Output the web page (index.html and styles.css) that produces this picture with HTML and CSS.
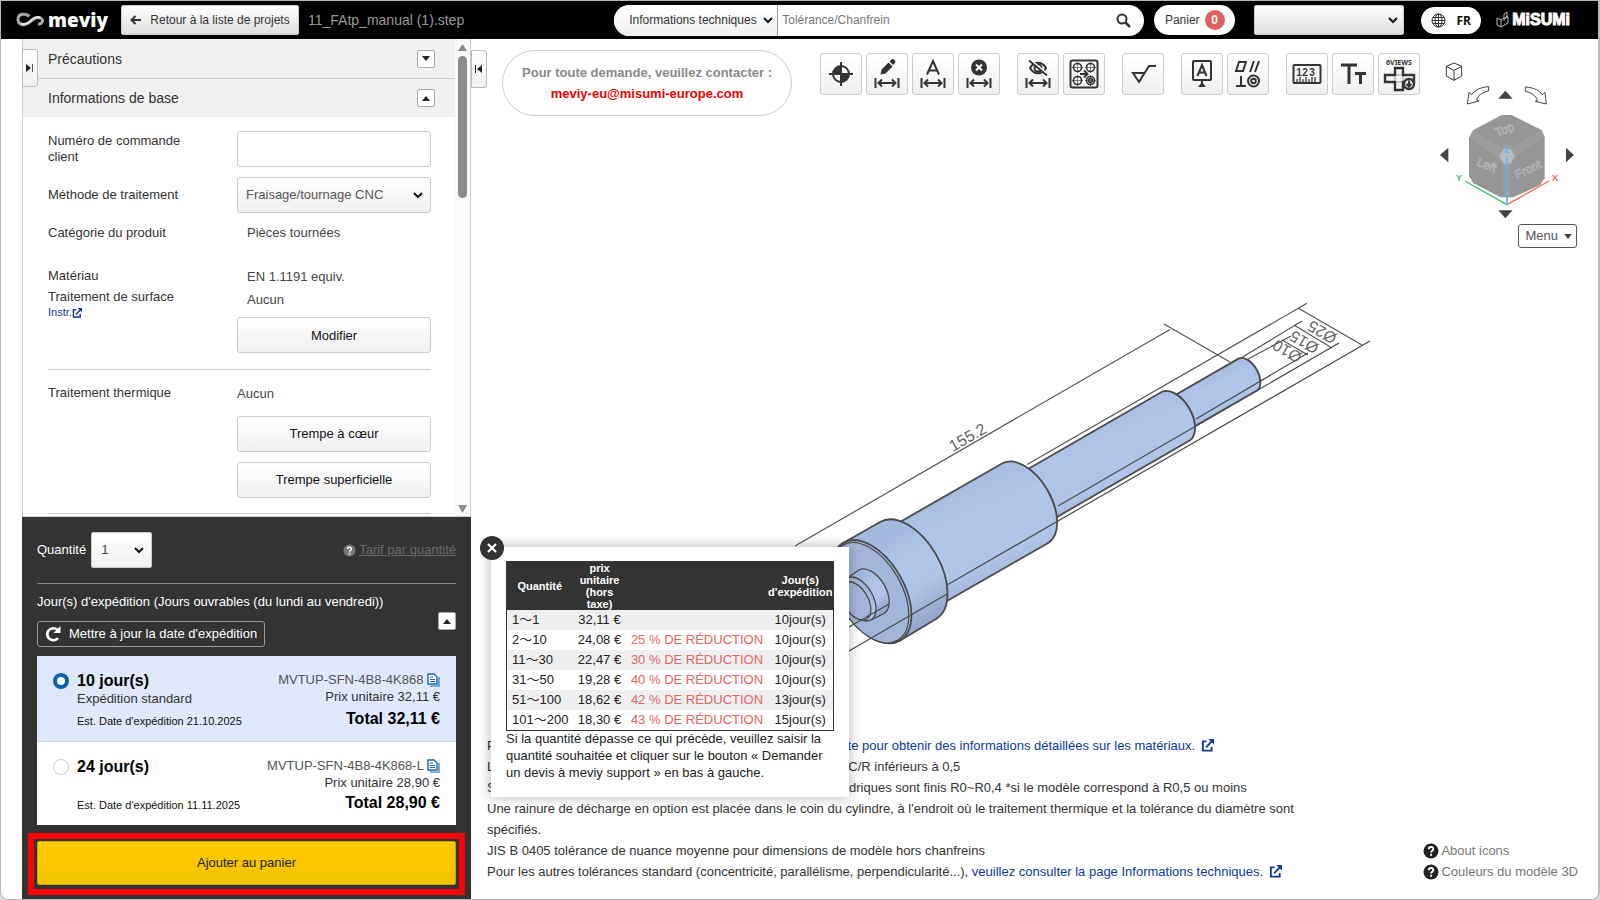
FILE: index.html
```html
<!DOCTYPE html>
<html lang="fr">
<head>
    <meta charset="UTF-8">
    <meta name="viewport" content="width=device-width, initial-scale=1.0">
    <title>meviy</title>
    <link rel="stylesheet" href="styles.css">
</head>
<body>
    <!-- Shared icons -->
    <svg class="sprite" aria-hidden="true">
        <symbol id="arrow-range" viewBox="0 0 26 12">
            <path d="M1.500 1v10M24.500 1v10" stroke="#333" stroke-width="2"/>
            <path d="M4 6h18M8 2.500L4.500 6l3.500 3.500M18 2.500L21.500 6l-3.500 3.500" fill="none" stroke="#333" stroke-width="2"/>
        </symbol>
        <symbol id="external" viewBox="0 0 14 14">
            <path d="M6 2.500H2v10h9.500V8.500" fill="none" stroke="currentColor" stroke-width="2"/>
            <path d="M5.500 9L12 2" stroke="currentColor" stroke-width="2"/>
            <path d="M8 0h6v6z" fill="currentColor"/>
        </symbol>
        <symbol id="question" viewBox="0 0 16 16">
            <circle cx="8" cy="8" r="7.500" fill="currentColor"/>
            <path class="mark" d="M5.700 6.300C5.700 3.300 10.400 3.400 10.300 6c0 1.700-2.200 1.700-2.200 3.600M8.100 10.800v2" fill="none" stroke-width="1.900"/>
        </symbol>
        <symbol id="copy" viewBox="0 0 13 14">
            <path d="M1 1h6l3 3v7H1z" fill="#fff" stroke="#1b66b5" stroke-width="1.400"/>
            <path d="M3 4h3M3 6.500h5M3 8.500h5" stroke="#1b66b5"/>
            <path d="M3 13h9V4" fill="none" stroke="#5b94cd" stroke-width="1.600"/>
        </symbol>
    </svg>

    <div class="app">
        <header class="topbar">
            <div class="logo">
                <svg width="30" height="16" viewBox="0 0 30 16">
                    <path d="M13.500 4.200C9 .8 2 1.500 2 7.500c0 5.500 7 7 12 2.500 4-3.500 7-5.500 10.500-4 4 2 1.500 6.500-2.500 6" fill="none" stroke="#aaa5aa" stroke-width="3"/>
                    <path d="M5 11.500c4 2 8-1 11-4 3-2.500 6-3 8.500-1.500" fill="none" stroke="#e8e6e8" stroke-width="2"/>
                </svg>
                <span>meviy</span>
            </div>
            <button class="back-btn" type="button">
                <svg width="12" height="10" viewBox="0 0 12 10"><path d="M11 5H2M5.500 1L1.500 5l4 4" fill="none" stroke="#333" stroke-width="2"/></svg>
                Retour à la liste de projets
            </button>
            <span class="file-name">11_FAtp_manual (1).step</span>

            <form class="search">
                <select class="search-type" aria-label="Type de recherche">
                    <option>Informations techniques</option>
                </select>
                <input class="search-input" type="text" placeholder="Tolérance/Chanfrein" aria-label="Recherche">
                <button class="search-btn" type="button" aria-label="Rechercher">
                    <svg width="15" height="15" viewBox="0 0 15 15"><circle cx="6" cy="6" r="4.500" fill="none" stroke="#333" stroke-width="2"/><path d="M9.500 9.500L14 14" stroke="#333" stroke-width="2.500"/></svg>
                </button>
            </form>
            <button class="cart" type="button">Panier <span class="badge">0</span></button>
            <select class="account" aria-label="Compte"><option></option></select>
            <button class="lang" type="button">
                <svg width="15" height="15" viewBox="0 0 15 15" fill="none" stroke="#333">
                    <circle cx="7.500" cy="7.500" r="6.500"/><ellipse cx="7.500" cy="7.500" rx="3.500" ry="6.500"/><path d="M7.500 1v13M1 7.500h13M2 4.500h11M2 10.500h11"/>
                </svg>
                FR
            </button>
            <div class="misumi">
                <svg width="14" height="18" viewBox="0 0 14 18" fill="none" stroke="#bbb">
                    <path d="M1 7l4 2v7l-4-2zM5 9l3-2v3M5 16l7-4V6l-4 2M8 8V3l3-2v4l-3 3M12 6l-1-1"/>
                </svg>
                <span>MiSUMi</span>
            </div>
        </header>

        <main class="workspace">
            <aside class="sidebar">
                <button class="side-tab" type="button" aria-label="Déplier">
                    <svg width="8" height="8" viewBox="0 0 8 8"><path d="M0 0l5 4-5 4z" fill="#222"/><path d="M6.500 0v8" stroke="#555"/></svg>
                </button>
                <div class="settings">
                    <div class="settings-body">
                        <div class="section-head">
                            <span>Précautions</span>
                            <button class="toggle" type="button" aria-label="Ouvrir"><svg width="8" height="5" viewBox="0 0 8 5"><path d="M0 0h8L4 5z" fill="#222"/></svg></button>
                        </div>
                        <div class="section-head">
                            <span>Informations de base</span>
                            <button class="toggle" type="button" aria-label="Fermer"><svg width="8" height="5" viewBox="0 0 8 5"><path d="M0 5h8L4 0z" fill="#222"/></svg></button>
                        </div>
                        <div class="fields">
                            <div class="row tall">
                                <label for="order">Numéro de commande client</label>
                                <input class="field" id="order" type="text">
                            </div>
                            <div class="row">
                                <label for="method">Méthode de traitement</label>
                                <select class="field" id="method"><option>Fraisage/tournage CNC</option></select>
                            </div>
                            <div class="row category">
                                <span>Catégorie du produit</span>
                                <span class="value">Pièces tournées</span>
                            </div>
                            <div class="row material">
                                <div>
                                    <div>Matériau</div>
                                    <div>Traitement de surface</div>
                                    <a class="instr" href="#">Instr.<svg width="10" height="10"><use href="#external"/></svg></a>
                                </div>
                                <div>
                                    <div class="value">EN 1.1191 equiv.</div>
                                    <div class="value">Aucun</div>
                                    <button class="field" type="button">Modifier</button>
                                </div>
                            </div>
                            <div class="row heat">
                                <div>Traitement thermique</div>
                                <div class="heat-options">
                                    <div>Aucun</div>
                                    <button class="field" type="button">Trempe à cœur</button>
                                    <button class="field" type="button">Trempe superficielle</button>
                                </div>
                            </div>
                        </div>
                    </div>
                    <div class="scrollbar">
                        <svg width="9" height="8" viewBox="0 0 9 8"><path d="M0 7L4.500 0 9 7z" fill="#8b8b8b"/></svg>
                        <div class="thumb"></div>
                        <svg width="9" height="8" viewBox="0 0 9 8"><path d="M0 0h9L4.500 8z" fill="#8b8b8b"/></svg>
                    </div>
                </div>

                <section class="order">
                    <div class="quantity">
                        <label for="qty">Quantité</label>
                        <select class="qty" id="qty"><option>1</option></select>
                        <a class="price-link" href="#"><svg width="13" height="13"><use href="#question"/></svg><span>Tarif par quantité</span></a>
                    </div>
                    <div class="ship-title">Jour(s) d'expédition (Jours ouvrables (du lundi au vendredi))</div>
                    <div class="ship-tools">
                        <button class="refresh" type="button">
                            <svg width="16" height="16" viewBox="0 0 16 16"><path d="M12.500 4A6 6 0 1 0 13 12" fill="none" stroke="#fff" stroke-width="2.600"/><path d="M15.500 0v7H8.500z" fill="#fff"/></svg>
                            Mettre à jour la date d'expédition
                        </button>
                        <button class="toggle" type="button" aria-label="Fermer"><svg width="8" height="5" viewBox="0 0 8 5"><path d="M0 5h8L4 0z" fill="#222"/></svg></button>
                    </div>
                    <div class="plans">
                        <label class="plan selected">
                            <input type="radio" name="plan" checked>
                            <span class="plan-info">
                                <span class="days">10 jour(s)</span>
                                <span>Expédition standard</span>
                                <span class="date">Est. Date d'expédition 21.10.2025</span>
                            </span>
                            <span class="plan-price">
                                <span class="code">MVTUP-SFN-4B8-4K868 <svg width="13" height="14"><use href="#copy"/></svg></span>
                                <span>Prix unitaire 32,11 €</span>
                                <span class="total">Total 32,11 €</span>
                            </span>
                        </label>
                        <label class="plan">
                            <input type="radio" name="plan">
                            <span class="plan-info">
                                <span class="days">24 jour(s)</span>
                                <span class="date">Est. Date d'expédition 11.11.2025</span>
                            </span>
                            <span class="plan-price">
                                <span class="code">MVTUP-SFN-4B8-4K868-L <svg width="13" height="14"><use href="#copy"/></svg></span>
                                <span>Prix unitaire 28,90 €</span>
                                <span class="total">Total 28,90 €</span>
                            </span>
                        </label>
                    </div>
                    <div class="highlight">
                        <button class="add-btn" type="button">Ajouter au panier</button>
                    </div>
                </section>
            </aside>

            <section class="viewer">
                <!-- 3D model with dimensions -->
                <svg class="model" width="600" height="370" viewBox="780 290 600 370">
                    <defs>
                        <linearGradient id="body" gradientUnits="objectBoundingBox" x1="0.300" y1="0.200" x2="0.700" y2="0.900">
                            <stop offset="0" stop-color="#a3b8de"/>
                            <stop offset="0.300" stop-color="#b0c5e9"/>
                            <stop offset="0.650" stop-color="#afc4e8"/>
                            <stop offset="1" stop-color="#93a8cc"/>
                        </linearGradient>
                    </defs>
                    <g fill="none" stroke="#555" stroke-width="1.200">
                        <path d="M795 546L1170 329.500M1164 324l66 38M1027 464.500L1307 303.300M1241 358l61-37M1248 359l43-23M1298 308l64 37M1294 325l38 23M1282 340l26 15"/>
                    </g>
                    <g fill="url(#body)" stroke="#4a4a4a" stroke-width="1.800">
                        <path d="M1168 399.300L1238.500 358.600A18.500 10.700 60 0 1 1257 390.600L1185 432z"/>
                        <path d="M1009 480L1162 391.800A28 16.200 60 0 1 1190 440.200L1040 526.800z"/>
                        <path d="M848.500 551.500L1002.500 463.200A46 26.500 60 0 1 1048.500 542.800L894.500 631z"/>
                        <path d="M843.200 543L880 522A56 32.300 60 0 1 936 619L899.700 640.700z"/>
                        <ellipse cx="871.500" cy="591.700" rx="56.500" ry="32.600" transform="rotate(60 871.500 591.700)"/>
                        <ellipse cx="870" cy="592.700" rx="55" ry="31.700" transform="rotate(60 870 592.700)" fill="#a3b6d9" stroke-width="1.300"/>
                        <path d="M846.500 578.500L859 570A25 14.400 60 0 1 884 613.500L871 620z" stroke-width="1.300"/>
                        <ellipse cx="859" cy="599" rx="24" ry="13.900" transform="rotate(60 859 599)" stroke-width="1.300"/>
                        <ellipse cx="856" cy="601" rx="21" ry="12.100" transform="rotate(60 856 601)" fill="#a3b6d9" stroke-width="1.300"/>
                    </g>
                    <path d="M849 627l40-23M849 651l98-57M947 585L1370 341M1058 506L1339 343M1196 419l112-66" fill="none" stroke="#4a4a4a" stroke-width="1.200"/>
                    <g class="dim">
                        <text transform="translate(953 452) rotate(-30)">155.2</text>
                        <text transform="translate(1338 335) rotate(210)">Ø25</text>
                        <text transform="translate(1320 345) rotate(210)">Ø15</text>
                        <text transform="translate(1303 354) rotate(210)">Ø10</text>
                    </g>
                </svg>

                <div class="viewer-top">
                    <button class="side-tab" type="button" aria-label="Replier">
                        <svg width="8" height="8" viewBox="0 0 8 8"><path d="M7 0L2 4l5 4z" fill="#222"/><path d="M.5 0v8" stroke="#222"/></svg>
                    </button>
                    <div class="contact">
                        <div>Pour toute demande, veuillez contacter :</div>
                        <a href="mailto:meviy-eu@misumi-europe.com">meviy-eu@misumi-europe.com</a>
                    </div>
                    <div class="toolbar">
                        <div class="tools">
                            <button type="button" aria-label="Origine"><svg width="30" height="30" viewBox="0 0 30 30"><circle cx="15" cy="15" r="8" fill="#fff" stroke="#333" stroke-width="2"/><path d="M15 15V7a8 8 0 0 0-8 8zM15 15v8a8 8 0 0 0 8-8z" fill="#333"/><path d="M15 3v24M3 15h24" stroke="#333" stroke-width="2"/></svg></button>
                            <button type="button" aria-label="Modifier la cote"><svg width="30" height="30" viewBox="0 0 30 30"><path d="M8.500 15.500l1-5 7-7 4 4-7 7zM17.500 2.500l2-2q1.500-1 3 .5t.5 3l-2 2z" fill="#333"/><use href="#arrow-range" x="2" y="18" width="26" height="12"/></svg></button>
                            <button type="button" aria-label="Texte de cote"><svg width="30" height="30" viewBox="0 0 30 30"><path d="M9 15.500L15 2l6 13.500M11 11.500h8" fill="none" stroke="#333" stroke-width="2"/><use href="#arrow-range" x="2" y="18" width="26" height="12"/></svg></button>
                            <button type="button" aria-label="Supprimer la cote"><svg width="30" height="30" viewBox="0 0 30 30"><circle cx="15" cy="8.500" r="8" fill="#333"/><path d="M12 5.500l6 6M18 5.500l-6 6" stroke="#fff" stroke-width="2"/><use href="#arrow-range" x="2" y="18" width="26" height="12"/></svg></button>
                        </div>
                        <div class="tools">
                            <button type="button" aria-label="Masquer les cotes"><svg width="30" height="30" viewBox="0 0 30 30"><path d="M7 9C11 2 19 2 23 9c-4 7-12 7-16 0z" fill="none" stroke="#333" stroke-width="2"/><circle cx="15" cy="9" r="3.500" fill="none" stroke="#333" stroke-width="2"/><path d="M7 .5l18 15" stroke="#f8f8f8" stroke-width="2"/><path d="M6 1.500l18 15" stroke="#333" stroke-width="1.800"/><use href="#arrow-range" x="2" y="18" width="26" height="12"/></svg></button>
                            <button type="button" aria-label="Trous"><svg width="30" height="30" viewBox="0 0 30 30" fill="none" stroke="#333" stroke-width="1.600"><rect x="1.500" y="1.500" width="27" height="27" rx="2" stroke-width="2"/><circle cx="8.500" cy="8.500" r="4"/><circle cx="21.500" cy="8.500" r="4"/><circle cx="8.500" cy="21.500" r="4"/><circle cx="21.500" cy="21.500" r="4"/><circle cx="21.500" cy="21.500" r="2"/><path d="M8.500 3v11M3 8.500h11M21.500 3v11M16 8.500h11M8.500 16v11M3 21.500h11M21.500 16v11M16 21.500h11" stroke-width=".6"/><path d="M11 15h7M15 11.500l3.500 3.500-3.500 3.500" stroke-width="2"/></svg></button>
                        </div>
                        <div class="tools">
                            <button type="button" aria-label="Rugosité"><svg width="30" height="30" viewBox="0 0 30 30"><path d="M28 7h-7L11 23 5 14h11" fill="none" stroke="#333" stroke-width="2"/></svg></button>
                        </div>
                        <div class="tools">
                            <button type="button" aria-label="Référence"><svg width="30" height="30" viewBox="0 0 30 30"><rect x="6" y="2" width="18" height="19" rx="1" fill="none" stroke="#333" stroke-width="2"/><path d="M10.500 17L15 6l4.500 11M12 13.500h6" fill="none" stroke="#333" stroke-width="2"/><path d="M15 21v4" stroke="#333" stroke-width="2"/><path d="M11 28l4-5 4 5z" fill="#333"/></svg></button>
                            <button type="button" aria-label="Tolérance géométrique"><svg width="30" height="30" viewBox="0 0 30 30" fill="none" stroke="#333" stroke-width="2"><path d="M6 3h7l-3 9H3zM17 13l4-11M22 13l4-11M8 17v10M3 27h10"/><circle cx="20.500" cy="22" r="5.500"/><circle cx="20.500" cy="22" r="2.300"/></svg></button>
                        </div>
                        <div class="tools">
                            <button type="button" aria-label="Mesure"><svg width="30" height="30" viewBox="0 0 30 30"><rect x="1.500" y="6" width="27" height="18" rx="1" fill="none" stroke="#333" stroke-width="2"/><text class="ruler" x="7" y="17">1</text><text class="ruler" x="13" y="17">2</text><text class="ruler" x="20" y="17">3</text><path d="M5 23v-3M8 23v-5M11 23v-3M14 23v-5M17 23v-3M20 23v-5M23 23v-5" stroke="#333" stroke-width="1.300"/></svg></button>
                            <button type="button" aria-label="Texte"><svg width="30" height="30" viewBox="0 0 30 30"><path d="M3 6h16M11 6v19M17 14.500h11M22.500 14.500V25" fill="none" stroke="#333" stroke-width="3"/></svg></button>
                            <button type="button" aria-label="6 vues"><svg width="36" height="38" viewBox="0 0 36 38"><text class="views" x="18" y="10">6VIEWS</text><path d="M14 20h8v7h-8z" fill="none" stroke="#999"/><path d="M14 13h8v7h11v7H22v8h-8v-8H4v-7h10z" fill="none" stroke="#333" stroke-width="2.400"/><circle cx="28" cy="29" r="5" fill="#f4f4f4" stroke="#333" stroke-width="2.400"/><path d="M28 25.500v5M25.500 29l2.500 2.500 2.500-2.500" fill="none" stroke="#333" stroke-width="2"/></svg></button>
                        </div>
                    </div>
                    <!-- View cube -->
                    <div class="view-nav">
                        <svg width="170" height="168" viewBox="30 0 170 168">
                            <g transform="scale(.3333)">
                                <path d="M162 39l23 10v29l-23 13-23-13V49zM139 49l23 12 23-12M162 61v30" fill="none" stroke="#333" stroke-width="3"/>
                                <path d="M266 110v13c-22 5-32 14-36 27l6 3-34 9 5-35 8 7c10-14 25-22 51-24zM376 111v13c22 5 32 14 36 27l-6 3 33 8-4-35-8 7c-10-14-25-21-51-23z" fill="#fff" stroke="#444" stroke-width="3"/>
                                <path d="M295 146l21-24 22 24zM295 481l21 24 22-24zM145 293v44l-25-22zM498 293v44l24-22z" fill="#444"/>
                                <path d="M305 195h30l90 45 9 22v123l-14 20-80 37h-38l-82-42-13-22V265l13-25z" fill="#969696"/>
                                <path d="M220 240l81 50 20-10 20 10 84-50 9 22-87 60-16 23v97h-22v-97l-18-23-84-57z" fill="#9d9d9d"/>
                                <path d="M298 319l12-22h22l13 22-13 22h-22z" fill="#b4bbc2"/>
                                <path d="M195 393l126 71" stroke="#3cc463" stroke-width="4"/>
                                <path d="M447 393l-126 71" stroke="#ff6363" stroke-width="4"/>
                                <path d="M321 464V320" stroke="#69aef2" stroke-width="5"/>
                            </g>
                            <text class="face" transform="translate(97 87) rotate(-22)">Top</text>
                            <text class="face" transform="translate(76 115) rotate(22)">Left</text>
                            <text class="face" transform="translate(117 129) rotate(-25)">Front</text>
                            <text class="axis" x="56" y="131" fill="#3cc463">Y</text>
                            <text class="axis" x="152" y="131" fill="#ff6363">X</text>
                            <text class="axis" x="104" y="103" fill="#69aef2">Z</text>
                        </svg>
                        <button class="menu-btn" type="button">Menu <svg width="8" height="5" viewBox="0 0 8 5"><path d="M0 0h8L4 5z" fill="#444"/></svg></button>
                    </div>
                </div>

                <div class="viewer-bottom">
                    <div class="notes">
                        <p>Pour connaître les matériaux, veuillez consulter la <a href="#">page suivante pour obtenir des informations détaillées sur les matériaux. <svg width="13" height="13"><use href="#external"/></svg></a></p>
                        <p>Les arêtes non spécifiées du modèle 3D sont usinées avec un C/R inférieurs à 0,5</p>
                        <p>Surfaces intérieures brutes et bords extérieurs des pièces cylindriques sont finis R0~R0,4 *si le modèle correspond à R0,5 ou moins</p>
                        <p>Une rainure de décharge en option est placée dans le coin du cylindre, à l'endroit où le traitement thermique et la tolérance du diamètre sont spécifiés.</p>
                        <p>JIS B 0405 tolérance de nuance moyenne pour dimensions de modèle hors chanfreins</p>
                        <p>Pour les autres tolérances standard (concentricité, parallélisme, perpendicularité...), <a href="#">veuillez consulter la page Informations techniques. <svg width="13" height="13"><use href="#external"/></svg></a></p>
                    </div>
                    <div class="help">
                        <a href="#"><svg width="16" height="16"><use href="#question"/></svg>About icons</a>
                        <a href="#"><svg width="16" height="16"><use href="#question"/></svg>Couleurs du modèle 3D</a>
                    </div>
                </div>

                <div class="popup">
                    <button class="close" type="button" aria-label="Fermer"><svg width="12" height="12" viewBox="0 0 12 12"><path d="M2 2l8 8M10 2l-8 8" stroke="#fff" stroke-width="2"/></svg></button>
                    <table>
                        <thead>
                            <tr><th class="col-qty">Quantité</th><th class="col-price">prix unitaire (hors taxe)</th><th></th><th class="col-days">Jour(s) d'expédition</th></tr>
                        </thead>
                        <tbody>
                            <tr><td>1～1</td><td>32,11 €</td><td></td><td>10jour(s)</td></tr>
                            <tr><td>2～10</td><td>24,08 €</td><td>25 % DE RÉDUCTION</td><td>10jour(s)</td></tr>
                            <tr><td>11～30</td><td>22,47 €</td><td>30 % DE RÉDUCTION</td><td>10jour(s)</td></tr>
                            <tr><td>31～50</td><td>19,28 €</td><td>40 % DE RÉDUCTION</td><td>10jour(s)</td></tr>
                            <tr><td>51～100</td><td>18,62 €</td><td>42 % DE RÉDUCTION</td><td>13jour(s)</td></tr>
                            <tr><td>101～200</td><td>18,30 €</td><td>43 % DE RÉDUCTION</td><td>15jour(s)</td></tr>
                        </tbody>
                    </table>
                    <p>Si la quantité dépasse ce qui précède, veuillez saisir la quantité souhaitée et cliquer sur le bouton « Demander un devis à meviy support » en bas à gauche.</p>
                </div>
            </section>
        </main>
    </div>
</body>
</html>
```
FILE: styles.css
```css
* {
    margin: 0;
    padding: 0;
    box-sizing: border-box;
}
body {
    background: #ddd;
    font-family: "Liberation Sans", "Noto Sans CJK JP", Arial, sans-serif;
    font-size: 13px;
    line-height: 16px;
    color: #333;
}
button, input, select {
    font: inherit;
    color: inherit;
}
button {
    display: flex;
    align-items: center;
    justify-content: center;
    cursor: pointer;
}
select {
    appearance: none;
    background: url("data:image/svg+xml,%3Csvg xmlns='http://www.w3.org/2000/svg' width='10' height='7'%3E%3Cpath d='M1 1l4 4 4-4' fill='none' stroke='%23111' stroke-width='2'/%3E%3C/svg%3E") no-repeat right 7px center, linear-gradient(#fff, #f0f0f0);
}
a {
    color: #0a3a9e;
    text-decoration: none;
}
.sprite {
    position: absolute;
    width: 0;
    height: 0;
}
.app {
    display: flex;
    flex-direction: column;
    height: 100vh;
    min-height: 700px;
    overflow: hidden;
    background: #fff;
    border: 1px solid #b5b9b5;
    border-right: 2px solid #bbb;
    border-radius: 0 0 8px 8px;
}

/* Top bar */
.topbar {
    display: flex;
    align-items: center;
    height: 38px;
    padding: 0 28px 0 15px;
    background: #000;
    flex-shrink: 0;
    font-size: 12px;
}
.logo {
    display: flex;
    align-items: center;
    gap: 2px;
    width: 105px;
    color: #fff;
    font: 800 19px "Open Sans", sans-serif;
}
.back-btn {
    gap: 8px;
    width: 178px;
    height: 30px;
    border: 1px solid #ccc;
    border-radius: 2px;
    background: linear-gradient(#fff, #ddd);
}
.file-name {
    margin-left: 9px;
    font-size: 14px;
    color: #999;
}
.search {
    display: flex;
    align-items: center;
    width: 530px;
    height: 31px;
    margin-left: auto;
    background: #fff;
    border-radius: 16px;
    overflow: hidden;
}
.search-type {
    width: 164px;
    height: 31px;
    padding-left: 15px;
    border: none;
    border-right: 1px solid #999;
    background-position: right 4px center, 0 0;
}
.search-input {
    flex: 1;
    height: 31px;
    padding-left: 4px;
    border: none;
    outline: none;
}
.search-input::placeholder {
    color: #777;
}
.search-btn {
    width: 42px;
    height: 31px;
    border: none;
    background: none;
}
.cart {
    gap: 5px;
    width: 81px;
    height: 30px;
    margin-left: 10px;
    border: none;
    border-radius: 15px;
    background: #fff;
}
.badge {
    width: 20px;
    height: 20px;
    border-radius: 50%;
    background: #e06060;
    color: #fff;
    line-height: 20px;
    text-align: center;
    font-weight: bold;
}
.account {
    width: 150px;
    height: 30px;
    margin-left: 19px;
    border: 1px solid #ccc;
    border-radius: 2px;
    background: url("data:image/svg+xml,%3Csvg xmlns='http://www.w3.org/2000/svg' width='10' height='7'%3E%3Cpath d='M1 1l4 4 4-4' fill='none' stroke='%23111' stroke-width='2'/%3E%3C/svg%3E") no-repeat right 5px center, linear-gradient(#fff, #ddd);
}
.lang {
    gap: 10px;
    width: 60px;
    height: 27px;
    margin-left: 17px;
    border: none;
    border-radius: 14px;
    background: #fff;
    color: #111;
    font: bold 12px "Noto Sans", sans-serif;
}
.misumi {
    display: flex;
    align-items: center;
    gap: 2px;
    margin-left: 15px;
    color: #fff;
    font-size: 16px;
    font-weight: bold;
    -webkit-text-stroke: 1px #fff;
}

/* Layout */
.workspace {
    display: flex;
    flex: 1;
    min-height: 0;
    padding-left: 21px;
}
.sidebar {
    position: relative;
    display: flex;
    flex-direction: column;
    width: 449px;
    flex-shrink: 0;
    border-left: 1px solid #ccc;
    border-right: 1px solid #ccc;
}
.side-tab {
    width: 16px;
    height: 38px;
    border: 1px solid #bbb;
    border-radius: 0 3px 3px 0;
    background: linear-gradient(#fff, #f0f0f0);
}
.sidebar > .side-tab {
    position: absolute;
    left: -1px;
    top: 10px;
}
.settings {
    display: flex;
    flex: 1;
    min-height: 0;
    border-bottom: 1px solid #ccc;
}
.settings-body {
    flex: 1;
    overflow: hidden;
}
.section-head {
    display: flex;
    align-items: center;
    justify-content: space-between;
    height: 39px;
    padding: 0 20px 0 25px;
    background: #f1f1f1;
    font-size: 14px;
}
.section-head + .section-head {
    border-top: 1px solid #ccc;
}
.toggle {
    width: 18px;
    height: 18px;
    border: 1px solid #aaa;
    border-radius: 2px;
    background: #fff;
}
.scrollbar {
    display: flex;
    flex-direction: column;
    align-items: center;
    width: 15px;
    padding: 5px 0 3px;
    background: #fafafa;
}
.thumb {
    width: 9px;
    height: 142px;
    margin: 4px 0 auto;
    border-radius: 5px;
    background: #8b8b8b;
}

/* Form */
.fields {
    padding: 14px 24px 0 25px;
}
.row {
    display: grid;
    grid-template-columns: 144px 194px;
    justify-content: space-between;
    align-items: center;
    margin-bottom: 10px;
}
.row.tall {
    min-height: 36px;
}
.field {
    width: 194px;
    height: 36px;
    border: 1px solid #ccc;
    border-radius: 3px;
    background-color: #fff;
}
select.field {
    padding-left: 8px;
    color: #555;
}
button.field {
    background: linear-gradient(#fff, #f0f0f0);
    color: #111;
}
.value {
    padding-left: 10px;
    color: #444;
}
.row.category {
    padding: 2px 0;
}
.row.material {
    align-items: start;
    margin: 22px 0 15px;
    padding-bottom: 16px;
    border-bottom: 1px solid #ccc;
    line-height: 21px;
}
.row.material .value {
    line-height: 23px;
}
.row.material .field {
    margin-top: 6px;
}
.instr {
    display: flex;
    align-items: center;
    font-size: 11px;
    line-height: 11px;
}
.row.heat {
    align-items: start;
    padding-bottom: 15px;
    border-bottom: 1px solid #ccc;
}
.heat-options {
    display: grid;
    gap: 10px;
    padding-top: 1px;
}
.heat-options div {
    margin-bottom: 4px;
    color: #444;
}

/* Order panel */
.order {
    margin: 0 -1px;
    padding: 15px 15px 4px;
    background: #333;
    color: #fff;
}
.quantity {
    display: flex;
    align-items: center;
    gap: 5px;
    padding-bottom: 15px;
    border-bottom: 1px solid #888;
}
.qty {
    width: 61px;
    height: 36px;
    padding-left: 9px;
    border: 1px solid #ccc;
    border-radius: 2px;
    color: #444;
}
.price-link {
    display: flex;
    align-items: center;
    gap: 3px;
    margin-left: auto;
    color: #6a6a6a;
}
.price-link span {
    text-decoration: underline;
}
.mark {
    stroke: #fff;
}
.price-link svg {
    color: #777;
}
.ship-title {
    padding-top: 10px;
}
.ship-tools {
    display: flex;
    justify-content: space-between;
    align-items: flex-start;
    padding: 2px 0 9px;
}
.refresh {
    gap: 8px;
    height: 26px;
    margin-top: 9px;
    padding: 0 7px;
    border: 1px solid #999;
    border-radius: 3px;
    background: #333;
}
.plans {
    background: #fff;
    color: #333;
}
.plan {
    display: flex;
    height: 83px;
    padding: 15px 16px 0;
}
.plan.selected {
    height: 86px;
    background: #dfe8fd;
    border-bottom: 1px solid #ccd3e0;
}
.plan input {
    appearance: none;
    width: 16px;
    height: 16px;
    margin: 2px 8px 0 0;
    border: 1px solid #ccc;
    border-radius: 50%;
    background: #fff;
}
.plan input:checked {
    border: 4px solid #0b61b0;
}
.plan-info, .plan-price {
    display: flex;
    flex-direction: column;
}
.plan-price {
    margin-left: auto;
    text-align: right;
    line-height: 17px;
}
.days, .total {
    color: #000;
    font-size: 16px;
    line-height: 20px;
    font-weight: bold;
}
.date {
    margin: auto 0 13px;
    font-size: 11px;
    line-height: 14px;
    color: #111;
}
.code {
    color: #555;
}
.code svg {
    vertical-align: -3px;
}
.total {
    margin: auto 0 12px;
}
.highlight {
    margin: 8px -9px 0;
    padding: 2px 3px 4px;
    border: 6px solid #f00;
}
.add-btn {
    width: 100%;
    height: 44px;
    border: 1px solid #c9a400;
    border-radius: 2px;
    background: linear-gradient(#ffcc00, #f2c200);
    color: #222;
}

/* Viewer */
.viewer {
    position: relative;
    display: flex;
    flex-direction: column;
    justify-content: space-between;
    flex: 1;
    min-width: 0;
}
.model {
    position: absolute;
    left: 309px;
    top: 251px;
}
.dim text {
    font-size: 16px;
    fill: #666;
}
.viewer-top {
    display: flex;
    align-items: flex-start;
    padding: 11px 12px 0 0;
}
.contact {
    width: 290px;
    height: 66px;
    margin-left: 15px;
    padding-top: 11px;
    border: 1px solid #ccc;
    border-radius: 33px;
    text-align: center;
    line-height: 21px;
    font-weight: bold;
    color: #8a8a8a;
}
.contact a {
    color: #f00000;
}
.toolbar {
    display: flex;
    gap: 17px;
    margin: 3px 0 0 28px;
}
.tools {
    display: flex;
    gap: 4px;
}
.tools button {
    width: 42px;
    height: 42px;
    border: 1px solid #ccc;
    border-radius: 3px;
    background: linear-gradient(#fff, #f0f0f0);
}
.ruler {
    font-size: 10px;
    font-weight: bold;
    fill: #333;
    text-anchor: middle;
}
.views {
    font: bold 7px "Noto Sans", sans-serif;
    fill: #333;
    text-anchor: middle;
}
.view-nav {
    display: flex;
    flex-direction: column;
    align-items: flex-end;
    gap: 6px;
    margin-left: auto;
}
.view-nav > svg {
    margin-right: -14px;
}
.face {
    font-size: 12px;
    fill: #999;
    stroke: #c4c4c4;
    stroke-width: 0.5px;
}
.axis {
    font-size: 9px;
    font-weight: bold;
}
.menu-btn {
    gap: 6px;
    height: 24px;
    margin-right: 9px;
    padding: 0 4px 0 6px;
    border: 1px solid #555;
    border-radius: 3px;
    background: #fff;
    color: #555;
}
.viewer-bottom {
    display: flex;
    justify-content: space-between;
    align-items: flex-end;
    padding: 0 20px 17px 16px;
    line-height: 21px;
}
.notes {
    width: 820px;
}
.notes svg {
    margin-left: 2px;
    vertical-align: -2px;
}
.help a {
    display: flex;
    align-items: center;
    gap: 2px;
    color: #777;
}
.help svg {
    color: #222;
}

/* Price popup */
.popup {
    position: absolute;
    left: 20px;
    top: 508px;
    width: 358px;
    padding: 14px 15px 16px;
    background: #fff;
    box-shadow: 0 0 12px rgba(0, 0, 0, 0.3);
    color: #222;
}
.close {
    position: absolute;
    left: -11px;
    top: -11px;
    width: 24px;
    height: 24px;
    border: none;
    border-radius: 50%;
    background: #333;
}
table {
    width: 328px;
    border: 1px solid #333;
    border-collapse: collapse;
    table-layout: fixed;
}
th {
    background: #333;
    color: #fff;
    font-size: 11px;
    line-height: 12px;
}
.col-qty {
    width: 66px;
}
.col-price {
    width: 54px;
    padding: 0 6px;
}
.col-days {
    width: 66px;
}
td {
    height: 20px;
    line-height: 20px;
    text-align: center;
    white-space: nowrap;
}
td:first-child {
    padding-left: 5px;
    text-align: left;
}
td:nth-child(3) {
    color: #e06666;
}
tbody tr:nth-child(odd) {
    background: #efefef;
}
.popup p {
    margin-top: -1px;
    line-height: 17px;
}
```
